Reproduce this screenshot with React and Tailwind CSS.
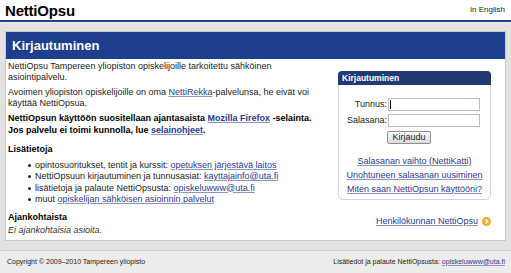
import React from 'react';

const sans = { fontFamily: '"Liberation Sans", Arial, sans-serif' };

const A = ({ children, className = '' }) => (
  <a href="#" className={`text-[#2a3a8c] underline decoration-[#8a94c0] ${className}`}>{children}</a>
);

const GoIcon = () => (
  <svg width="9" height="9" viewBox="0 0 10 10" className="shrink-0">
    <circle cx="5" cy="5" r="4.6" fill="#f2b233" stroke="#d98c10" strokeWidth="0.6" />
    <path d="M4 2.8 L6.2 5 L4 7.2" fill="none" stroke="#fff" strokeWidth="1.4" />
  </svg>
);

export default function App() {
  return (
    <div className="w-[511px] h-[273px] overflow-hidden bg-[#e2e2e2] flex flex-col text-[#222]" style={sans}>
      {/* header */}
      <div className="h-[20px] bg-white flex items-center justify-between pl-[5px] pr-[6px] shrink-0">
        <span className="text-[15px] font-bold text-black tracking-[-0.2px] leading-none">NettiOpsu</span>
        <a href="#" className="text-[8px] text-[#222] leading-none">in English</a>
      </div>
      <div className="h-[2px] bg-[#1f3d8e] shrink-0" />
      <div className="h-[1px] bg-[#f2f4f8] shrink-0" />

      {/* main panel */}
      <div className="mt-[8px] ml-[5px] w-[501px] h-[210px] border border-[#c9c9c9] bg-white flex flex-col shrink-0">
        <div className="h-[27px] bg-[#1e3e8e] flex items-center pl-[6px] shrink-0">
          <h1 className="text-white font-bold text-[13px] leading-none">Kirjautuminen</h1>
        </div>
        <div className="flex flex-1">
          {/* left column */}
          <div className="w-[312px] pl-[2px] pt-[2px] text-[9px] leading-[11px]">
            <p>NettiOpsu Tampereen yliopiston opiskelijoille tarkoitettu sähköinen asiointipalvelu.</p>
            <p className="mt-[4px]">Avoimen yliopiston opiskelijoille on oma <A className="no-underline">NettiRekka</A>-palvelunsa, he eivät voi käyttää NettiOpsua.</p>
            <p className="mt-[3px] font-bold leading-[12px] text-black">
              NettiOpsun käyttöön suositellaan ajantasaista <A>Mozilla Firefox</A> -selainta. Jos palvelu ei toimi kunnolla, lue <A>selainohjeet</A>.
            </p>
            <h2 className="mt-[8px] font-bold text-black">Lisätietoja</h2>
            <ul className="mt-[5px] pl-[20px] leading-[11.3px]">
              {[
                ['opintosuoritukset, tentit ja kurssit: ', 'opetuksen järjestävä laitos'],
                ['NettiOpsuun kirjautuminen ja tunnusasiat: ', 'kayttajainfo@uta.fi'],
                ['lisätietoja ja palaute NettiOpsusta: ', 'opiskeluwww@uta.fi'],
                ['muut ', 'opiskelijan sähköisen asioinnin palvelut'],
              ].map(([t, l]) => (
                <li key={l} className="flex items-center">
                  <span className="w-[3px] h-[3px] rounded-full bg-[#222] mr-[4px] shrink-0" />
                  <span>{t}<A>{l}</A></span>
                </li>
              ))}
            </ul>
            <h2 className="mt-[7px] font-bold text-black">Ajankohtaista</h2>
            <p className="mt-[2px] italic text-[#333]">Ei ajankohtaisia asioita.</p>
          </div>

          {/* right column */}
          <div className="flex-1 pl-[22px] pr-[14px] pt-[12px] flex flex-col">
            <div className="w-[153px] border border-[#d4d4d4] rounded-[5px] flex flex-col">
              <div className="h-[14px] bg-[#223a72] rounded-t-[4px] -mx-[1px] -mt-[1px] flex items-center pl-[4px]">
                <span className="text-white font-bold text-[8.5px] leading-none">Kirjautuminen</span>
              </div>
              <div className="pt-[13px] flex flex-col text-[9px]">
                <div className="flex items-center h-[13px]">
                  <label className="w-[49px] text-right pr-[1px] text-[#222]">Tunnus:</label>
                  <div className="w-[92px] h-[13px] border border-[#b8bfc8] bg-white flex items-center pl-[1px]">
                    <span className="w-[1px] h-[9px] bg-black" />
                  </div>
                </div>
                <div className="flex items-center h-[13px] mt-[3px]">
                  <label className="w-[49px] text-right pr-[1px] text-[#222]">Salasana:</label>
                  <div className="w-[92px] h-[13px] border border-[#b8bfc8] bg-white" />
                </div>
                <div className="mt-[4px] pl-[48px]">
                  <button className="w-[44px] h-[13px] border border-[#8f8f8f] rounded-[2px] bg-gradient-to-b from-[#fafafa] to-[#dcdcdc] text-[9px] leading-none text-[#222]">Kirjaudu</button>
                </div>
                <div className="mt-[9px] flex flex-col items-center leading-[14px] pb-[3px]">
                  <A>Salasanan vaihto (NettiKatti)</A>
                  <A>Unohtuneen salasanan uusiminen</A>
                  <A>Miten saan NettiOpsun käyttööni?</A>
                </div>
              </div>
            </div>
            <div className="mt-[15px] flex items-center justify-end gap-[4px] text-[9px]">
              <A>Henkilökunnan NettiOpsu</A>
              <GoIcon />
            </div>
          </div>
        </div>
      </div>

      {/* footer */}
      <div className="mt-[9px] flex-1 border-t border-[#cfcfcf] bg-[#ececec] flex items-center justify-between pl-[7px] pr-[6px] text-[7px] text-[#222]">
        <span>Copyright © 2009–2010 Tampereen yliopisto</span>
        <span>Lisätiedot ja palaute NettiOpsusta: <A>opiskeluwww@uta.fi</A></span>
      </div>
    </div>
  );
}
